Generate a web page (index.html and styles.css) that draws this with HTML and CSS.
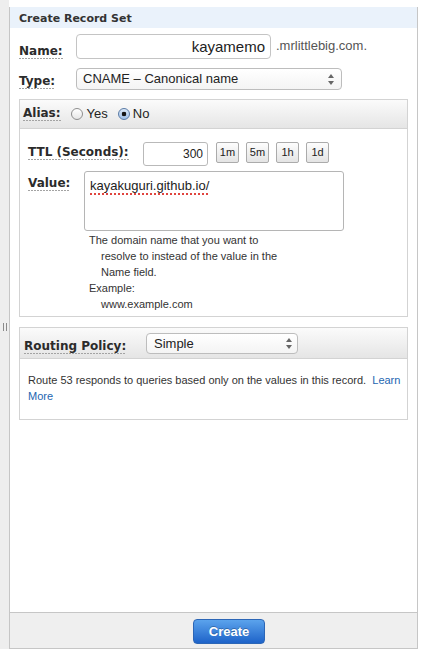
FILE: index.html
```html
<!DOCTYPE html>
<html>
<head>
<meta charset="utf-8">
<title>Create Record Set</title>
<link rel="stylesheet" href="styles.css">
</head>
<body>
<div class="page">
  <div class="gutter"><span class="grip"></span></div>
  <div class="panel">
    <div class="panel-title">Create Record Set</div>
    <div class="panel-body">
      <div class="row row-name">
        <div class="cell cell-main"><span class="label lbl-name">Name:</span></div>
        <div class="field field-name">kayamemo</div>
        <span class="suffix">.mrlittlebig.com.</span>
      </div>
      <div class="row row-type">
        <div class="cell cell-main"><span class="label lbl-type">Type:</span></div>
        <div class="select select-type">
          <span>CNAME – Canonical name</span>
          <svg class="arrows" width="6" height="11" viewBox="0 0 6 11"><path d="M3 0 L6 4 H0 Z M0 7 H6 L3 11 Z" fill="#666"/></svg>
        </div>
      </div>

      <div class="section section-alias">
        <div class="section-head head-alias">
          <span class="label lbl-alias">Alias:</span>
          <span class="radio radio-yes"></span><span class="radio-text text-yes">Yes</span>
          <span class="radio radio-no checked"></span><span class="radio-text text-no">No</span>
        </div>
        <div class="section-body body-alias">
          <div class="row row-ttl">
            <div class="cell cell-ttl"><span class="label lbl-ttl">TTL (Seconds):</span></div>
            <div class="field field-ttl">300</div>
            <div class="ttl-buttons">
              <span class="tbtn">1m</span>
              <span class="tbtn">5m</span>
              <span class="tbtn">1h</span>
              <span class="tbtn">1d</span>
            </div>
          </div>
          <div class="row row-value">
            <div class="cell cell-value"><span class="label lbl-value">Value:</span></div>
            <div class="textarea"><span class="misspelled">kayakuguri.github.io/</span></div>
          </div>
          <div class="help">
            <div>The domain name that you want to</div>
            <div class="indent">resolve to instead of the value in the</div>
            <div class="indent">Name field.</div>
            <div>Example:</div>
            <div class="indent">www.example.com</div>
          </div>
        </div>
      </div>

      <div class="section section-routing">
        <div class="section-head head-routing">
          <div class="cell cell-routing"><span class="label lbl-routing">Routing Policy:</span></div>
          <div class="select select-routing">
            <span>Simple</span>
            <svg class="arrows" width="6" height="11" viewBox="0 0 6 11"><path d="M3 0 L6 4 H0 Z M0 7 H6 L3 11 Z" fill="#666"/></svg>
          </div>
        </div>
        <div class="section-body body-routing">
          Route 53 responds to queries based only on the values in this record.&nbsp; <a class="link" href="#">Learn<br>More</a>
        </div>
      </div>
    </div>
    <div class="panel-foot">
      <button class="btn-create">Create</button>
    </div>
  </div>
</div>
</body>
</html>
```

FILE: styles.css
```css
body {
  margin: 0;
  background: #ffffff;
  font-family: "Liberation Sans", Arial, sans-serif;
  color: #222222;
}

.page {
  display: flex;
  height: 649px;
}

.gutter {
  width: 9px;
  flex: none;
  background: #eeeeee;
  position: relative;
}

.grip {
  position: absolute;
  left: 3px;
  top: 323px;
  width: 2px;
  height: 8px;
  border-left: 1px solid #8a8a8a;
  border-right: 1px solid #8a8a8a;
}

.panel {
  width: 407px;
  margin-top: 7px;
  border: 1px solid #c6c6c6;
  border-top: none;
  display: flex;
  flex-direction: column;
}

.panel-title {
  box-sizing: border-box;
  height: 21px;
  padding: 6px 0 0 9px;
  background: #eaf2fb;
  font: bold 11px/12px "DejaVu Sans", Verdana, sans-serif;
  color: #333333;
}

.panel-body {
  flex: 1;
  padding: 6px 9px 0;
}

.row {
  display: flex;
  align-items: flex-start;
}

.cell {
  flex: none;
}

.label {
  display: inline-block;
  font: bold 12px/14px "DejaVu Sans", Verdana, sans-serif;
  color: #2b2b2b;
  padding-bottom: 1px;
  background: linear-gradient(to right, #a3a3a3 67%, transparent 0) left bottom / 3px 1px repeat-x;
}

/* Name & Type */
.cell-main {
  width: 57px;
}

.lbl-name {
  margin-top: 10px;
}

.field {
  box-sizing: border-box;
  border-radius: 4px;
  background: #ffffff;
  flex: none;
}

.field-name {
  width: 195px;
  height: 25px;
  border: 1px solid #c4c4c4;
  text-align: right;
  padding-right: 5px;
  font-size: 15px;
  line-height: 23px;
  color: #222222;
}

.suffix {
  margin: 4px 0 0 5px;
  font-size: 13px;
  line-height: 15px;
  color: #555555;
}

.row-type {
  margin-top: 9px;
}

.lbl-type {
  margin-top: 6px;
}

.select {
  box-sizing: border-box;
  display: flex;
  align-items: center;
  justify-content: space-between;
  border: 1px solid #bdbdbd;
  border-radius: 4px;
  background: linear-gradient(#ffffff, #f4f4f4);
  font-size: 13px;
  color: #222222;
  flex: none;
}

.select-type {
  width: 266px;
  height: 22px;
  line-height: 20px;
  padding: 0 7px 0 6px;
}

.arrows {
  display: block;
}

/* Sections */
.section {
  border: 1px solid #d3d3d3;
}

.section-alias {
  margin-top: 9px;
}

.section-head {
  display: flex;
  align-items: flex-start;
  border-bottom: 1px solid #d3d3d3;
  background: linear-gradient(#fbfbfb, #e5e5e5);
}

.head-alias {
  height: 28px;
  padding-left: 3px;
}

.lbl-alias {
  margin-top: 6px;
}

.radio {
  box-sizing: border-box;
  width: 12px;
  height: 12px;
  margin-top: 8px;
  border-radius: 50%;
  border: 1px solid #8e8e8e;
  background: linear-gradient(#ffffff, #e6e6e6);
  flex: none;
}

.radio.checked {
  border-color: #5a7ba6;
  background: radial-gradient(circle, #151515 0 2px, transparent 2.6px), linear-gradient(#dbe8f7, #9ebfe8);
}

.radio-yes {
  margin-left: 10px;
}

.radio-no {
  margin-left: 10px;
}

.radio-text {
  margin-top: 6px;
  font-size: 13px;
  line-height: 15px;
  color: #222222;
}

.text-yes {
  margin-left: 4px;
}

.text-no {
  margin-left: 3px;
}

.body-alias {
  padding: 13px 8px 4px;
}

.cell-ttl {
  width: 115px;
}

.lbl-ttl {
  margin-top: 1px;
}

.field-ttl {
  width: 65px;
  height: 24px;
  border: 1px solid #b9b9b9;
  border-radius: 3px;
  text-align: right;
  padding-right: 4px;
  font-size: 12px;
  line-height: 22px;
}

.ttl-buttons {
  display: flex;
  gap: 7px;
  margin-left: 8px;
}

.tbtn {
  box-sizing: border-box;
  width: 23px;
  height: 21px;
  border: 1px solid #ababab;
  border-radius: 2px;
  background: linear-gradient(#fdfdfd, #e4e4e4);
  font-size: 11px;
  line-height: 19px;
  text-align: center;
  color: #222222;
}

.row-value {
  margin-top: 5px;
}

.cell-value {
  width: 56px;
}

.lbl-value {
  margin-top: 5px;
}

.textarea {
  box-sizing: border-box;
  width: 260px;
  height: 60px;
  border: 1px solid #b5b5b5;
  border-radius: 3px;
  padding: 6px 5px;
  font-size: 13px;
  line-height: 16px;
  color: #222222;
}

.misspelled {
  text-decoration: underline dotted #e0443e;
  text-decoration-thickness: 2px;
  text-underline-offset: 3px;
}

.help {
  margin: 1px 0 0 61px;
  font-size: 11px;
  line-height: 16px;
  color: #333333;
  white-space: nowrap;
}

.help .indent {
  padding-left: 12px;
}

.section-routing {
  margin-top: 10px;
}

.head-routing {
  height: 30px;
  padding-left: 4px;
}

.cell-routing {
  width: 122px;
}

.lbl-routing {
  margin-top: 11px;
}

.select-routing {
  width: 152px;
  height: 21px;
  margin-top: 5px;
  line-height: 19px;
  padding: 0 5px 0 7px;
}

.body-routing {
  padding: 13px 8px 15px;
  font-size: 11px;
  line-height: 16px;
  color: #333333;
  white-space: nowrap;
}

.link {
  color: #2466b1;
  text-decoration: none;
}

/* Footer */
.panel-foot {
  height: 35px;
  border-top: 1px solid #c6c6c6;
  background: #efefef;
  padding-left: 183px;
}

.btn-create {
  display: block;
  box-sizing: border-box;
  width: 72px;
  height: 25px;
  margin-top: 6px;
  padding: 0;
  border: 1px solid #2c66b6;
  border-radius: 4px;
  background: linear-gradient(#5ba3ec, #1e63c9);
  color: #ffffff;
  font: bold 13px/23px "Liberation Sans", Arial, sans-serif;
  text-shadow: 0 -1px 0 rgba(0, 0, 0, 0.25);
}
```
